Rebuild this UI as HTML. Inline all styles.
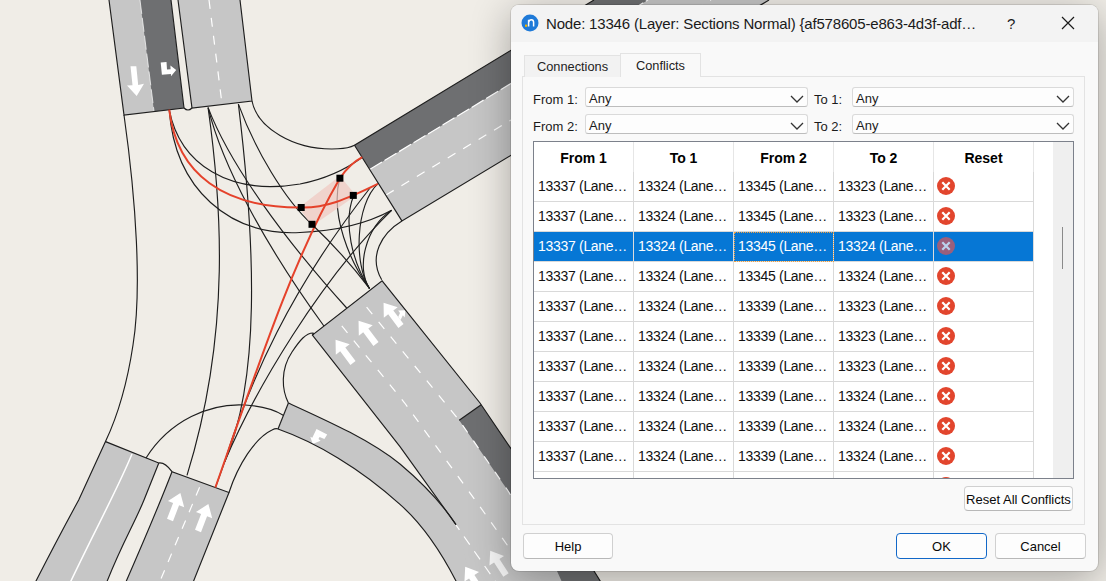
<!DOCTYPE html>
<html><head><meta charset="utf-8">
<style>
*{box-sizing:border-box;margin:0;padding:0}
html,body{width:1106px;height:581px;overflow:hidden;background:#f0ede7;font-family:"Liberation Sans",sans-serif;color:#1b1b1b}
#map{position:absolute;left:0;top:0;width:1106px;height:581px}
#dlg{position:absolute;left:511px;top:5px;width:587px;height:566px;border-radius:8px;background:#f9f9f9;box-shadow:0 8px 40px rgba(0,0,0,0.32),0 0 0 1px rgba(0,0,0,0.1);overflow:hidden}
#title{position:absolute;left:0;top:0;width:100%;height:37px;background:#f3f3f3}
.abs{position:absolute}
#icon{left:11px;top:9px;width:17px;height:17px;border-radius:50%;background:#2a7fd6}
#ttl{left:35px;top:9px;font-size:15px;line-height:20px;letter-spacing:-0.18px;white-space:nowrap;color:#1a1a1a}
.tab{position:absolute;font-size:12.8px;color:#222;text-align:center}
#panel{left:11px;top:71px;width:563px;height:449px;border:1px solid #e3e3e3;background:#f9f9f9}
.lbl{position:absolute;font-size:13px;line-height:16px;color:#1b1b1b;white-space:nowrap}
.combo{position:absolute;height:20px;background:#fdfdfd;border:1px solid #dadada;border-bottom-color:#bdbdbd;border-radius:3px;font-size:13px;line-height:18px;padding:1.5px 0 0 3px}
.combo svg{position:absolute;right:3px;top:6.5px}
#tbl{left:22px;top:136px;width:541px;height:338px;border:1px solid #7c818b;background:#fff;overflow:hidden}
.hd{position:absolute;top:0;height:30px;font-weight:bold;font-size:14px;text-align:center;line-height:30px;padding-top:1px;color:#000}
.row{position:absolute;left:0;width:499px;height:30px;border-bottom:1px solid #d9d9d9}
.cell{position:absolute;top:0;height:30px;width:100px;border-right:1px solid #d9d9d9;font-size:14px;letter-spacing:-0.3px;line-height:29px;padding-left:4px;white-space:nowrap;color:#111}
.sel{background:#0677d5}
.sel .cell{color:#fff;border-right-color:#dcdcdc}
.xi{position:absolute;left:3px;top:5px;width:18px;height:18px}
.btn{position:absolute;background:#fdfdfd;border:1px solid #d0d0d0;border-bottom-color:#b8b8b8;border-radius:4px;font-size:13px;text-align:center;color:#0a0a0a}
</style></head><body>
<svg id="map" width="1106" height="581" viewBox="0 0 1106 581">
<rect width="1106" height="581" fill="#f0ede7"/>
<g stroke="none">
<!-- N road -->
<polygon points="109,0 171,0 184,108 124,115" fill="#c6c6c6"/>
<polygon points="140,0 171,0 184,108 154,111.6" fill="#6e6f71"/>
<polygon points="171,0 178,0 192,108 184,108" fill="#efece6"/>
<polygon points="178,0 240,0 252,101 192,108" fill="#c6c6c6"/>
<!-- NE road -->
<polygon points="354.5,145.2 594,0 769,0 401.9,220.9" fill="#c6c6c6"/>
<polygon points="354.5,145.2 594,0 648,0 370,169.3" fill="#6e6f71"/>
<!-- SE road -->
<polygon points="312.4,335 382.1,280.8 480,403 594,571 612,600 470,610 456,524.6 400,446.7" fill="#c6c6c6"/>
<polygon points="459.2,420.3 481.2,404.7 594,571 612,600 570,600 557,571 507.5,490" fill="#6e6f71"/>
<!-- slip road -->
<path d="M288.4,403 C330,422 370,440 400,464 C425,485 445,508 456,524.6 L480,610 L470,610 C462,595 458,588 456,581 C440,550 420,522 400,504.4 C360,468 315,442 278,429 Z" fill="#c6c6c6"/>
<!-- SW roads -->
<path d="M105.5,441.6 L158.8,463 L144,500 C133,527 117,552 100,600 L27,600 L36,581 Q58,538 78.7,500 L105.5,441.6 Z" fill="#c6c6c6"/>
<path d="M172,471.7 L229,492.5 L186,600 L118,600 C140,550 158,508 172,471.7 Z" fill="#c6c6c6"/>
</g>
<!-- lane markings -->
<g stroke="#fff" fill="none">
<line x1="140" y1="0" x2="154" y2="111" stroke-width="1" stroke-dasharray="14,4" opacity="0.7"/>
<line x1="209" y1="0" x2="222" y2="104" stroke-width="1.2" stroke-dasharray="9,9"/>
<line x1="370" y1="169.3" x2="648" y2="0" stroke-width="1.2" stroke-dasharray="14,3"/>
<line x1="386" y1="195" x2="711" y2="0" stroke-width="1.2" stroke-dasharray="9,9"/>
<path d="M341.8,325.8 L404.7,403 L479.5,506 L520,563" stroke-width="1.2" stroke-dasharray="9,10"/>
<path d="M366.6,307.2 L459.2,420.3 L507.5,490 L557,571" stroke-width="1.2" stroke-dasharray="9,10"/>
<path d="M456,525 L500,588" stroke-width="1.2" stroke-dasharray="10,8" stroke-dashoffset="-14"/>
<path d="M132,454 C115,495 92,535 62,600" stroke-width="1.5"/>
<line x1="199.6" y1="487.3" x2="152" y2="600" stroke-width="1.2" stroke-dasharray="9,9"/>
</g>
<!-- arrows -->
<g fill="#fff">
<polygon points="130.5,66.2 136.3,66.2 138.2,85 144,83.7 136.7,96 127,85.6 132.5,85.3"/>
<polygon points="160.7,62.6 166.5,62 167,69.5 170.6,69.2 170.4,65.5 176.2,70.1 171,76.3 170.9,74 161.9,74.8"/>
<g transform="translate(170,520) rotate(21)"><polygon points="-3.2,0 3.2,0 3.2,-17 8.7,-17 0,-29 -8.7,-17 -3.2,-17"/></g>
<g transform="translate(198,531) rotate(21)"><polygon points="-3.2,0 3.2,0 3.2,-17 8.7,-17 0,-29 -8.7,-17 -3.2,-17"/></g>
<g transform="translate(353,363) rotate(-37)"><polygon points="-3.2,0 3.2,0 3.2,-17 8.7,-17 0,-29 -8.7,-17 -3.2,-17"/></g>
<g transform="translate(376,344) rotate(-37)"><polygon points="-3.2,0 3.2,0 3.2,-17 8.7,-17 0,-29 -8.7,-17 -3.2,-17"/></g>
<g transform="translate(401,326) rotate(-37)"><polygon points="-3.2,0 3.2,0 3.2,-17 8.7,-17 0,-29 -8.7,-17 -3.2,-17"/><polygon points="3.2,-5 8,-7.5 8,-4.5 13,-10 7,-14 7,-11 3.2,-9"/></g>
<polygon points="316.5,429.1 327.2,434.6 324.4,439.1 319.6,437 318.5,439 320.6,440.8 312.7,444 310.3,436.7 312.3,437.8"/>
<g transform="translate(506,575) rotate(-33)" opacity="0.85"><polygon points="-3.2,0 3.2,0 3.2,-17 8.7,-17 0,-29 -8.7,-17 -3.2,-17"/></g>
<g transform="translate(481,591) rotate(-33)"><polygon points="-3.2,0 3.2,0 3.2,-17 8.7,-17 0,-29 -8.7,-17 -3.2,-17"/></g>
</g>
<!-- road outlines -->
<g stroke="#1e1e1e" stroke-width="1.15" fill="none">
<path d="M109,0 L124,115 L184,108 L171,0"/>
<path d="M178,0 L192,108 L252,101 L240,0"/>
<path d="M184,108 Q188,112 192,108"/>
<path d="M594,0 L354.5,145.2 L401.9,220.9 L769,0"/>
<path d="M456,524.6 L400,446.7 L312.4,335 L382.1,280.8 L480,403 L594,571 L612,600"/>
<path d="M459.2,420.3 L481.2,404.7"/>
<path d="M288.4,403 C330,422 370,440 400,464 C425,485 445,508 456,524.6"/>
<path d="M278,429 L288.4,403"/>
<path d="M278,429 C315,442 360,468 400,504.4 C420,522 440,550 456,581 L470,610"/>
<path d="M27,600 L36,581 Q58,538 78.7,500 L105.5,441.6 L158.8,463 L144,500 C133,527 117,552 100,600"/>
<path d="M158.8,463 Q165,462 172,471.7"/>
<path d="M118,600 C140,550 158,508 172,471.7 L229,492.5 L186,600"/>
<!-- curbs -->
<path d="M124,115 C136,200 142,290 133,345 C127,385 118,415 105.5,441.6"/>
<path d="M252,101 C257,127 293,151 338,148.8 C346,148.4 351,147 354.5,145.2"/>
<path d="M401.9,220.9 C382,233 368,256 381.7,279.8"/>
<path d="M229,492.5 C238,465 255,438 272,430 Q276,428 278,429"/>
<path d="M288.4,403 C282,390 280,370 292,352 C300,340 306,333 313,333 Q314,334 312.4,335"/>
<!-- turning paths -->
<path d="M169.2,109.6 C180,165 230,196 300,184 C325,179 345,170 362.3,157.2"/>
<path d="M169.2,109.6 C175,190 230,236 300,232.5 C340,231 370,222 391.6,210.3"/>
<path d="M208.1,107.6 C221,200 232,330 187,475.4"/>
<path d="M208.1,107.6 C222,165 265,245 323.9,326"/>
<path d="M208.1,107.6 C230,165 285,240 346.7,308"/>
<path d="M238.4,104.1 C256,250 260,380 224.7,461.7 L215.4,487.5"/>
<path d="M238.4,104.1 C255,150 285,200 311.8,224.2 C335,246 357,272 369.5,288.5"/>
<path d="M369.5,288.5 C350,262 330,215 339.7,178.5"/>
<path d="M369.5,288.5 C352,262 343,222 353.6,195.7"/>
<path d="M369.5,288.5 C354,265 355,205 378.2,183.4"/>
<path d="M369.5,288.5 C356,268 365,228 391.6,210.3"/>
<path d="M224.7,461.7 C250,380 290,290 370,188"/>
<path d="M224.7,461.7 C255,390 320,280 391.6,210.3"/>
<path d="M146,458 C170,420 210,403 245,405 C262,406 275,410 283.2,415.2"/>
</g>
<!-- pink highlight -->
<polygon points="339.9,176 356,195.5 312,226 299,207.5" fill="#f0c8c0" opacity="0.7"/>
<!-- red paths -->
<g stroke="#e5422b" stroke-width="2" fill="none">
<path d="M169.2,109.6 C177,175 225,208 301.2,207.5 C325,208 345,200 377.8,183.9"/>
<path d="M215.4,487.5 C260,360 295,255 339.9,178.2 C347,168 353,162 362.3,157.2"/>
</g>
<g fill="#000">
<rect x="336.4" y="174.7" width="7" height="7"/>
<rect x="349.8" y="191.9" width="7" height="7"/>
<rect x="297.7" y="204" width="7" height="7"/>
<rect x="308.5" y="220.8" width="7" height="7"/>
</g>
</svg>

<div id="dlg">
  <div id="title"></div>
  <svg class="abs" style="left:10px;top:9px" width="18" height="18" viewBox="0 0 18 18"><circle cx="9" cy="9" r="8.5" fill="#1f7ad8"/><rect x="4" y="10.6" width="2.2" height="2.2" fill="#f5b400"/><path d="M7.6 12.6V5.8M7.6 8.2Q8.2 5.7 10.3 5.7Q12.6 5.7 12.6 8.3V12.6" fill="none" stroke="#fff" stroke-width="1.5"/></svg>
  <div class="abs" id="ttl">Node: 13346 (Layer: Sections Normal) {af578605-e863-4d3f-adf…</div>
  <div class="abs" style="left:496px;top:9px;font-size:15px;line-height:20px">?</div>
  <svg class="abs" style="left:550px;top:11px" width="14" height="14"><path d="M1 1L13 13M13 1L1 13" stroke="#1a1a1a" stroke-width="1.2"/></svg>

  <div class="abs" id="panel"></div>
  <div class="tab" style="left:13px;top:50px;width:97px;height:22px;background:#f2f2f2;border:1px solid #e3e3e3;border-bottom:none;line-height:22px">Connections</div>
  <div class="tab" style="left:109px;top:48px;width:81px;height:24px;background:#f9f9f9;border:1px solid #e3e3e3;border-bottom:none;line-height:23px">Conflicts</div>

  <div class="lbl" style="left:22px;top:86.5px">From 1:</div>
  <div class="combo" style="left:74px;top:82px;width:223px">Any<svg width="14" height="8"><path d="M1 1L7 7L13 1" fill="none" stroke="#333" stroke-width="1.3"/></svg></div>
  <div class="lbl" style="left:303px;top:86.5px">To 1:</div>
  <div class="combo" style="left:341px;top:82px;width:222px">Any<svg width="14" height="8"><path d="M1 1L7 7L13 1" fill="none" stroke="#333" stroke-width="1.3"/></svg></div>
  <div class="lbl" style="left:22px;top:113.5px">From 2:</div>
  <div class="combo" style="left:74px;top:109px;width:223px">Any<svg width="14" height="8"><path d="M1 1L7 7L13 1" fill="none" stroke="#333" stroke-width="1.3"/></svg></div>
  <div class="lbl" style="left:303px;top:113.5px">To 2:</div>
  <div class="combo" style="left:341px;top:109px;width:222px">Any<svg width="14" height="8"><path d="M1 1L7 7L13 1" fill="none" stroke="#333" stroke-width="1.3"/></svg></div>

  <div class="abs" id="tbl">
    <div id="rows">
<div class="hd" style="left:0px;width:100px;border-right:1px solid #e6e6e6">From 1</div>
<div class="hd" style="left:100px;width:100px;border-right:1px solid #e6e6e6">To 1</div>
<div class="hd" style="left:200px;width:100px;border-right:1px solid #e6e6e6">From 2</div>
<div class="hd" style="left:300px;width:100px;border-right:1px solid #e6e6e6">To 2</div>
<div class="hd" style="left:400px;width:100px;border-right:1px solid #e6e6e6">Reset</div>
<div class="row" style="top:30px"><div class="cell" style="left:0px">13337 (Lane…</div><div class="cell" style="left:100px">13324 (Lane…</div><div class="cell" style="left:200px">13345 (Lane…</div><div class="cell" style="left:300px">13323 (Lane…</div><div class="cell" style="left:400px"><svg class="xi" viewBox="0 0 18 18"><circle cx="9" cy="9" r="9" fill="#e2452d"/><path d="M5.3 5.3L12.7 12.7M12.7 5.3L5.3 12.7" stroke="#fff" stroke-width="2.2"/></svg></div></div>
<div class="row" style="top:60px"><div class="cell" style="left:0px">13337 (Lane…</div><div class="cell" style="left:100px">13324 (Lane…</div><div class="cell" style="left:200px">13345 (Lane…</div><div class="cell" style="left:300px">13323 (Lane…</div><div class="cell" style="left:400px"><svg class="xi" viewBox="0 0 18 18"><circle cx="9" cy="9" r="9" fill="#e2452d"/><path d="M5.3 5.3L12.7 12.7M12.7 5.3L5.3 12.7" stroke="#fff" stroke-width="2.2"/></svg></div></div>
<div class="row sel" style="top:90px"><div class="cell" style="left:0px">13337 (Lane…</div><div class="cell" style="left:100px">13324 (Lane…</div><div class="cell" style="left:200px;outline:1px dotted #f0a040;outline-offset:-1px">13345 (Lane…</div><div class="cell" style="left:300px">13324 (Lane…</div><div class="cell" style="left:400px"><svg class="xi" viewBox="0 0 18 18"><circle cx="9" cy="9" r="9" fill="#9b5f7c"/><path d="M5.3 5.3L12.7 12.7M12.7 5.3L5.3 12.7" stroke="#bcd3ee" stroke-width="2.2"/></svg></div></div>
<div class="row" style="top:120px"><div class="cell" style="left:0px">13337 (Lane…</div><div class="cell" style="left:100px">13324 (Lane…</div><div class="cell" style="left:200px">13345 (Lane…</div><div class="cell" style="left:300px">13324 (Lane…</div><div class="cell" style="left:400px"><svg class="xi" viewBox="0 0 18 18"><circle cx="9" cy="9" r="9" fill="#e2452d"/><path d="M5.3 5.3L12.7 12.7M12.7 5.3L5.3 12.7" stroke="#fff" stroke-width="2.2"/></svg></div></div>
<div class="row" style="top:150px"><div class="cell" style="left:0px">13337 (Lane…</div><div class="cell" style="left:100px">13324 (Lane…</div><div class="cell" style="left:200px">13339 (Lane…</div><div class="cell" style="left:300px">13323 (Lane…</div><div class="cell" style="left:400px"><svg class="xi" viewBox="0 0 18 18"><circle cx="9" cy="9" r="9" fill="#e2452d"/><path d="M5.3 5.3L12.7 12.7M12.7 5.3L5.3 12.7" stroke="#fff" stroke-width="2.2"/></svg></div></div>
<div class="row" style="top:180px"><div class="cell" style="left:0px">13337 (Lane…</div><div class="cell" style="left:100px">13324 (Lane…</div><div class="cell" style="left:200px">13339 (Lane…</div><div class="cell" style="left:300px">13323 (Lane…</div><div class="cell" style="left:400px"><svg class="xi" viewBox="0 0 18 18"><circle cx="9" cy="9" r="9" fill="#e2452d"/><path d="M5.3 5.3L12.7 12.7M12.7 5.3L5.3 12.7" stroke="#fff" stroke-width="2.2"/></svg></div></div>
<div class="row" style="top:210px"><div class="cell" style="left:0px">13337 (Lane…</div><div class="cell" style="left:100px">13324 (Lane…</div><div class="cell" style="left:200px">13339 (Lane…</div><div class="cell" style="left:300px">13323 (Lane…</div><div class="cell" style="left:400px"><svg class="xi" viewBox="0 0 18 18"><circle cx="9" cy="9" r="9" fill="#e2452d"/><path d="M5.3 5.3L12.7 12.7M12.7 5.3L5.3 12.7" stroke="#fff" stroke-width="2.2"/></svg></div></div>
<div class="row" style="top:240px"><div class="cell" style="left:0px">13337 (Lane…</div><div class="cell" style="left:100px">13324 (Lane…</div><div class="cell" style="left:200px">13339 (Lane…</div><div class="cell" style="left:300px">13324 (Lane…</div><div class="cell" style="left:400px"><svg class="xi" viewBox="0 0 18 18"><circle cx="9" cy="9" r="9" fill="#e2452d"/><path d="M5.3 5.3L12.7 12.7M12.7 5.3L5.3 12.7" stroke="#fff" stroke-width="2.2"/></svg></div></div>
<div class="row" style="top:270px"><div class="cell" style="left:0px">13337 (Lane…</div><div class="cell" style="left:100px">13324 (Lane…</div><div class="cell" style="left:200px">13339 (Lane…</div><div class="cell" style="left:300px">13324 (Lane…</div><div class="cell" style="left:400px"><svg class="xi" viewBox="0 0 18 18"><circle cx="9" cy="9" r="9" fill="#e2452d"/><path d="M5.3 5.3L12.7 12.7M12.7 5.3L5.3 12.7" stroke="#fff" stroke-width="2.2"/></svg></div></div>
<div class="row" style="top:300px"><div class="cell" style="left:0px">13337 (Lane…</div><div class="cell" style="left:100px">13324 (Lane…</div><div class="cell" style="left:200px">13339 (Lane…</div><div class="cell" style="left:300px">13324 (Lane…</div><div class="cell" style="left:400px"><svg class="xi" viewBox="0 0 18 18"><circle cx="9" cy="9" r="9" fill="#e2452d"/><path d="M5.3 5.3L12.7 12.7M12.7 5.3L5.3 12.7" stroke="#fff" stroke-width="2.2"/></svg></div></div>
<div class="row" style="top:330px"><div class="cell" style="left:0px"></div><div class="cell" style="left:100px"></div><div class="cell" style="left:200px"></div><div class="cell" style="left:300px"></div><div class="cell" style="left:400px"><svg class="xi" viewBox="0 0 18 18"><circle cx="9" cy="9" r="9" fill="#e2452d"/><path d="M5.3 5.3L12.7 12.7M12.7 5.3L5.3 12.7" stroke="#fff" stroke-width="2.2"/></svg></div></div>
</div><!--endrows-->
    <div class="abs" style="left:519px;top:0;width:20px;height:336px;background:#efefef"></div>
    <div class="abs" style="left:528px;top:85px;width:1px;height:42px;background:#8a8a8a"></div>
  </div>

  <div class="btn" style="left:453px;top:481px;width:109px;height:25px;line-height:23px;padding-top:1px">Reset All Conflicts</div>
  <div class="btn" style="left:12px;top:528px;width:90px;height:26px;line-height:24px;padding-top:1px">Help</div>
  <div class="btn" style="left:385px;top:528px;width:91px;height:26px;line-height:24px;padding-top:1px;border:1px solid #1268c8">OK</div>
  <div class="btn" style="left:484px;top:528px;width:91px;height:26px;line-height:24px;padding-top:1px">Cancel</div>
</div>
</body></html>
